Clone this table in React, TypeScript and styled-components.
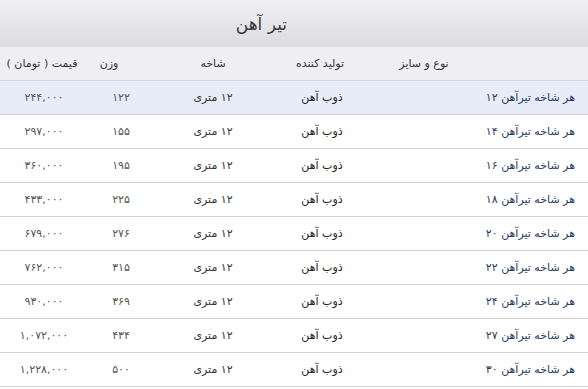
import React from 'react'
import styled, { createGlobalStyle } from 'styled-components'

const GlobalStyle = createGlobalStyle`
  html, body {
    margin: 0;
    padding: 0;
    background: #ffffff;
  }
  body {
    font-family: Tahoma, 'DejaVu Sans', sans-serif;
  }
`

// column widths, left to right on screen
const COLUMNS = '88px 66px 118px 100px 1fr'

const Wrapper = styled.div`
  width: 588px;
  overflow: hidden;
`

const TitleBar = styled.div`
  height: 47px;
  display: flex;
  align-items: center;
  justify-content: flex-start;
  padding-right: 301px;
  box-sizing: border-box;
  background: linear-gradient(to bottom, #f1f1f3 0%, #e6e6ea 50%, #dbdbe0 100%);
  color: #3a3a3a;
  font-size: 17px;
`

const Grid = styled.div`
  display: grid;
  grid-template-columns: ${COLUMNS};
  direction: ltr;
`

const HeadRow = styled(Grid)`
  height: 34px;
  background: #eeeef3;
  border-bottom: 1px solid #d6d6de;
  box-sizing: border-box;
`

const Row = styled(Grid)<{ active?: boolean }>`
  height: 34px;
  box-sizing: border-box;
  background: ${({ active }) => (active ? '#e8ebf8' : '#ffffff')};
  border-bottom: 1px solid #d2d2d6;
`

const HeadCell = styled.div<{ shift?: number }>`
  direction: rtl;
  display: flex;
  align-items: center;
  justify-content: center;
  padding-right: ${({ shift }) => shift || 0}px;
  font-size: 11px;
  color: #333333;
  white-space: nowrap;
`

const Cell = styled.div<{ align?: string; tone?: string }>`
  direction: rtl;
  display: flex;
  align-items: center;
  justify-content: ${({ align }) => align || 'center'};
  padding-right: ${({ align }) => (align === 'flex-start' ? 13 : 0)}px;
  font-size: 11px;
  color: ${({ tone }) => tone || '#555555'};
  white-space: nowrap;
`

const rows = [
  { size: '۱۲', weight: '۱۲۲', price: '۲۴۴,۰۰۰' },
  { size: '۱۴', weight: '۱۵۵', price: '۲۹۷,۰۰۰' },
  { size: '۱۶', weight: '۱۹۵', price: '۳۶۰,۰۰۰' },
  { size: '۱۸', weight: '۲۲۵', price: '۴۳۳,۰۰۰' },
  { size: '۲۰', weight: '۲۷۶', price: '۶۷۹,۰۰۰' },
  { size: '۲۲', weight: '۳۱۵', price: '۷۶۲,۰۰۰' },
  { size: '۲۴', weight: '۳۶۹', price: '۹۳۰,۰۰۰' },
  { size: '۲۷', weight: '۴۳۴', price: '۱,۰۷۲,۰۰۰' },
  { size: '۳۰', weight: '۵۰۰', price: '۱,۲۲۸,۰۰۰' },
]

const App: React.FC = () => {
  return (
    <Wrapper>
      <GlobalStyle />
      <TitleBar dir="rtl">تیر آهن</TitleBar>
      <HeadRow>
        <HeadCell shift={4}>قیمت ( تومان )</HeadCell>
        <HeadCell shift={24}>وزن</HeadCell>
        <HeadCell>شاخه</HeadCell>
        <HeadCell shift={4}>تولید کننده</HeadCell>
        <HeadCell shift={112}>نوع و سایز</HeadCell>
      </HeadRow>
      {rows.map((row, i) => (
        <Row key={row.size} active={i === 0}>
          <Cell>{row.price}</Cell>
          <Cell>{row.weight}</Cell>
          <Cell tone="#333333">۱۲ متری</Cell>
          <Cell tone="#222222">ذوب آهن</Cell>
          <Cell align="flex-start" tone="#1f3b63">
            هر شاخه تیرآهن {row.size}
          </Cell>
        </Row>
      ))}
    </Wrapper>
  )
}

export default App
